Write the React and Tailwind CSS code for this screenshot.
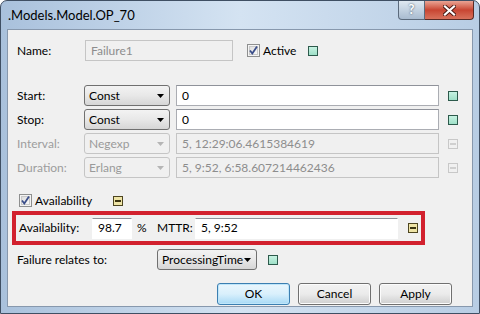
import React from 'react';

const font = { fontFamily: 'Lato, "Open Sans", sans-serif' };

function Indicator({ kind = 'green' }) {
    if (kind === 'green') {
        return <div className="w-[10px] h-[10px] border border-[#2d5a4c] bg-gradient-to-b from-[#c6f2e2] to-[#9fe0c8] shrink-0" />;
    }
    if (kind === 'yellow') {
        return (
            <div className="w-[10px] h-[10px] border border-[#4d4520] bg-[#eee4a6] flex items-center justify-center shrink-0">
                <div className="w-[6px] h-[2px] bg-[#3b3410]" />
            </div>
        );
    }
    return (
        <div className="w-[10px] h-[10px] border border-[#c8c8c8] bg-[#f0f0f0] flex items-center justify-center shrink-0">
            <div className="w-[6px] h-[2px] bg-[#cfcfcf]" />
        </div>
    );
}

function CheckBox() {
    return (
        <svg width="13" height="13" viewBox="0 0 13 13" className="shrink-0">
            <defs>
                <linearGradient id="cbg" x1="0" y1="0" x2="1" y2="1">
                    <stop offset="0" stopColor="#dcdcdc" />
                    <stop offset="1" stopColor="#fbfbfb" />
                </linearGradient>
            </defs>
            <rect x="0.5" y="0.5" width="12" height="12" fill="#f4f4f4" stroke="#8e8f8f" />
            <rect x="2.5" y="2.5" width="8" height="8" fill="url(#cbg)" stroke="#c9c9c9" />
            <path d="M3 6.5 L5.3 9.5 L10 2.5" fill="none" stroke="#3b4e8a" strokeWidth="1.8" />
        </svg>
    );
}

function Arrow({ disabled }) {
    return (
        <svg width="7" height="4" viewBox="0 0 7 4" className="shrink-0">
            <path d="M0 0 H7 L3.5 4 Z" fill={disabled ? '#b5b5b5' : '#000'} />
        </svg>
    );
}

function Select({ value, width, disabled }) {
    return (
        <div
            className={`h-[21px] ${width} rounded-[3px] border flex items-center justify-between pl-[4px] pr-[5px] shrink-0 ${disabled
                ? 'border-[#c5c5c5] bg-[#f0f0f0] text-[#9a9a9a]'
                : 'border-[#707070] bg-gradient-to-b from-[#f3f3f3] via-[#e8e8e8] to-[#d6d6d6] text-black'
                }`}
        >
            <span>{value}</span>
            <Arrow disabled={disabled} />
        </div>
    );
}

function TextBox({ value, width, disabled }) {
    return (
        <div
            className={`h-[21px] ${width} border flex items-center pl-[5px] shrink-0 ${disabled
                ? 'border-[#c5c5c5] bg-[#f0f0f0] text-[#8d8d8d]'
                : 'border-[#abadb3] border-t-[#8f929a] bg-white text-black'
                }`}
        >
            {value}
        </div>
    );
}

function Button({ label, primary }) {
    return (
        <div
            className={`w-[73px] h-[22px] rounded-[3px] border flex items-center justify-center text-black ${primary
                ? 'border-[#3c7fb1] bg-gradient-to-b from-[#eaf6fd] via-[#d9f0fc] to-[#a7d9f5] shadow-[inset_0_0_0_1px_#bfe6fa]'
                : 'border-[#707070] bg-gradient-to-b from-[#f2f2f2] via-[#ebebeb] to-[#cfcfcf] shadow-[inset_0_0_0_1px_#fcfcfc]'
                }`}
        >
            {label}
        </div>
    );
}

function FieldRow({ label, sel, val, disabled }) {
    return (
        <div className="flex items-center h-[21px]">
            <span className={`w-[67px] ${disabled ? 'text-[#9d9d9d]' : 'text-black'}`}>{label}</span>
            <Select value={sel} width="w-[86px]" disabled={disabled} />
            <div className="w-[6px]" />
            <TextBox value={val} width="w-[263px]" disabled={disabled} />
            <div className="w-[9px]" />
            <Indicator kind={disabled ? 'off' : 'green'} />
        </div>
    );
}

export default function App() {
    return (
        <div
            className="w-[480px] h-[314px] rounded-t-[7px] border border-[#3f4f63] bg-gradient-to-r from-[#a9c1dc] via-[#d4e3f2] to-[#b8cde4] flex flex-col overflow-hidden text-[12px]"
            style={font}
        >
            {/* Title bar */}
            <div className="h-[28px] flex items-start justify-between shrink-0">
                <span className="pl-[7px] pt-[4px] text-[13px] text-black leading-[20px]">.Models.Model.OP_70</span>
                <div className="flex mr-[5px]">
                    <div className="w-[27px] h-[19px] rounded-bl-[4px] border border-t-0 border-[#5b6a7c] bg-gradient-to-b from-[#dfe8f1] via-[#c3d2e1] to-[#a9bbd0] flex items-center justify-center text-[13px] font-bold text-white [text-shadow:0_0_2px_#2c3c50]">
                        ?
                    </div>
                    <div className="w-[49px] h-[19px] rounded-br-[4px] border border-l-0 border-t-0 border-[#5a2a24] bg-gradient-to-b from-[#e9a394] via-[#c84532] to-[#d8715c] flex items-center justify-center">
                        <svg width="13" height="11" viewBox="0 0 13 11">
                            <path d="M2 1.5 L11 9.5 M11 1.5 L2 9.5" stroke="#4a1a14" strokeWidth="4" strokeLinecap="square" />
                            <path d="M2 1.5 L11 9.5 M11 1.5 L2 9.5" stroke="#ffffff" strokeWidth="2.2" strokeLinecap="square" />
                        </svg>
                    </div>
                </div>
            </div>

            {/* Client area */}
            <div className="flex-1 mx-[6px] mb-[6px] border border-[#8798ad] bg-[#f0f0f0] flex flex-col pl-[9px] pt-[10px]">
                {/* Name */}
                <div className="flex items-center h-[21px]">
                    <span className="w-[68px] text-black">Name:</span>
                    <TextBox value="Failure1" width="w-[148px]" disabled />
                    <div className="w-[14px]" />
                    <CheckBox />
                    <span className="ml-[3px] text-black">Active</span>
                    <div className="w-[12px]" />
                    <Indicator kind="green" />
                </div>

                <div className="mt-[24px] flex flex-col gap-[3px]">
                    <FieldRow label="Start:" sel="Const" val="0" />
                    <FieldRow label="Stop:" sel="Const" val="0" />
                    <FieldRow label="Interval:" sel="Negexp" val="5, 12:29:06.4615384619" disabled />
                    <FieldRow label="Duration:" sel="Erlang" val="5, 9:52, 6:58.607214462436" disabled />
                </div>

                {/* Availability */}
                <div className="mt-[16px] flex items-center h-[13px] pl-[2px]">
                    <CheckBox />
                    <span className="ml-[3px] w-[78px] text-black">Availability</span>
                    <Indicator kind="yellow" />
                </div>

                <div className="mt-[4px] -ml-[5px] w-[413px] h-[34px] border-[4px] border-[#d2212e] flex items-center pl-[3px]">
                    <span className="w-[73px] text-black">Availability:</span>
                    <TextBox value="98.7" width="w-[40px] border-white" />
                    <span className="ml-[5px] w-[20px] text-black">%</span>
                    <span className="w-[38px] text-black">MTTR:</span>
                    <TextBox value="5, 9:52" width="w-[203px] border-white" />
                    <div className="w-[10px]" />
                    <Indicator kind="yellow" />
                </div>

                {/* Failure relates to */}
                <div className="mt-[4px] flex items-center h-[21px]">
                    <span className="w-[140px] text-black">Failure relates to:</span>
                    <Select value="ProcessingTime" width="w-[100px]" />
                    <div className="w-[11px]" />
                    <Indicator kind="green" />
                </div>

                {/* Buttons */}
                <div className="mt-[13px] flex gap-[8px] pl-[200px]">
                    <Button label="OK" primary />
                    <Button label="Cancel" />
                    <Button label="Apply" />
                </div>
            </div>
        </div>
    );
}
